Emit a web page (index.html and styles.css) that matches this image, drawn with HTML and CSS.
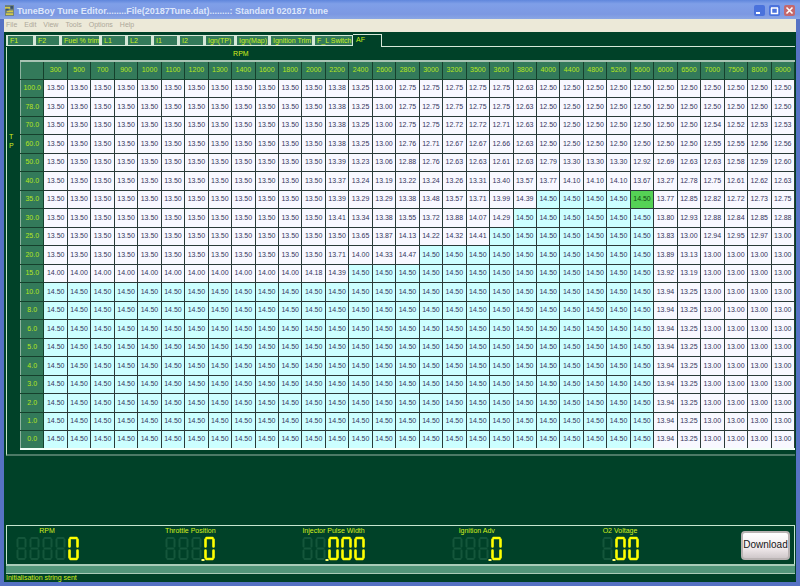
FILE: index.html
```html
<!DOCTYPE html>
<html lang="en">
<head>
<meta charset="utf-8">
<title>TuneBoy Tune Editor</title>
<link rel="stylesheet" href="styles.css">
</head>
<body>
<div class="window">
  <header class="titlebar">
    <svg class="app-icon" viewBox="0 0 10 12" aria-hidden="true">
      <rect width="10" height="12" fill="#6d7f78"/>
      <path d="M0 2h6v2H0zM2 6h7v2H2zM1 9h8v2H1z" fill="#d3c94a"/>
      <path d="M6 1h3v3H6zM1 4h3v2H1z" fill="#39506e"/>
    </svg>
    <h1 class="title">TuneBoy Tune Editor........File(20187Tune.dat)........: Standard 020187 tune</h1>
    <div class="controls">
      <button class="control" aria-label="Minimise"><svg viewBox="0 0 11 11"><path d="M2 7h4v2H2z" fill="#fff"/></svg></button>
      <button class="control" aria-label="Maximise"><svg viewBox="0 0 11 11"><path d="M2 3h7M2.500 3v5.500h6V3" fill="none" stroke="#fff" stroke-width="1.500"/></svg></button>
      <button class="control control-close" aria-label="Close"><svg viewBox="0 0 11 11"><path d="M2.500 2.500l6 6M8.500 2.500l-6 6" stroke="#fff" stroke-width="1.600"/></svg></button>
    </div>
  </header>
  <nav class="menu">
    <a href="#">File</a><a href="#">Edit</a><a href="#">View</a><a href="#">Tools</a><a href="#">Options</a><a href="#">Help</a>
  </nav>
  <main class="client">
    <div class="tabs">
      <button class="tab">F1</button>
      <button class="tab">F2</button>
      <button class="tab tab-fuel">Fuel % trim</button>
      <button class="tab">L1</button>
      <button class="tab">L2</button>
      <button class="tab">I1</button>
      <button class="tab">I2</button>
      <button class="tab tab-tp">Ign(TP)</button>
      <button class="tab tab-map">Ign(Map)</button>
      <button class="tab tab-trim">Ignition Trim</button>
      <button class="tab tab-switch">F_L Switch</button>
      <button class="tab tab-active">AF</button>
      <span class="tab-rule"></span>
    </div>
    <section class="page">
      <div class="axis-y"><span>T</span><span>P</span></div>
      <div class="map">
        <div class="axis-x">RPM</div>
        <table class="grid">
          <thead><tr id="rpm-row"><th></th></tr></thead>
          <tbody id="map-body"></tbody>
        </table>
      </div>
    </section>
    <div class="spacer"></div>
    <section class="dash">
      <div class="gauges">
        <div class="gauge"><span>RPM</span><div class="digits" data-value="----0"></div></div>
        <div class="gauge"><span>Throttle Position</span><div class="digits" data-value="---.0"></div></div>
        <div class="gauge"><span>Injector Pulse Width</span><div class="digits" data-value="--.000"></div></div>
        <div class="gauge"><span>Ignition Adv</span><div class="digits" data-value="---.0"></div></div>
        <div class="gauge"><span>O2 Voltage</span><div class="digits" data-value="-.00"></div></div>
      </div>
      <button class="download">Download</button>
    </section>
    <div class="progress"></div>
    <footer class="status">Initialisation string sent</footer>
  </main>
</div>
<script src="app.js"></script>
</body>
</html>
```
FILE: styles.css
```css
* {
  box-sizing: border-box;
}

body {
  margin: 0;
  font-family: "Liberation Sans", sans-serif;
  font-size: 7px;
  line-height: 10px;
}

button {
  font: inherit;
}

.window {
  display: flex;
  flex-direction: column;
  min-height: 100vh;
  border: solid #5672c4;
  border-width: 0 4px 4px;
  background: #5672c4;
}

.titlebar {
  display: flex;
  align-items: center;
  height: 19px;
  margin: 0 -4px;
  padding: 2px 5px 0 5px;
  background: linear-gradient(#5f86dc, #7f9fe8 20%, #7c98e2 75%, #8aa6e4);
}

.app-icon {
  width: 9px;
  height: 11px;
  margin-right: 3px;
}

.title {
  flex: 1;
  margin: 0;
  color: #dce6fb;
  font: bold 9px/12px "Liberation Sans", sans-serif;
  white-space: pre;
}

.controls {
  display: flex;
  gap: 4px;
}

.control {
  width: 11px;
  height: 11px;
  padding: 0;
  border: 0;
  border-radius: 2px;
  background: #4a72dc;
}

.control-close {
  background: #c4686c;
}

.control svg {
  display: block;
  width: 100%;
}

.menu {
  display: flex;
  gap: 7px;
  height: 13px;
  padding: 0 2px;
  background: #ece9d8;
  line-height: 12px;
}

.menu a {
  color: #aca899;
  text-decoration: none;
}

.client {
  display: flex;
  flex: 1;
  flex-direction: column;
  padding: 2px 1px 0 2px;
  background: #004128;
  color: #d4f01c;
}

.tabs {
  display: flex;
  align-items: flex-end;
  height: 13px;
}

.tab {
  flex: none;
  width: 26px;
  height: 11px;
  margin-bottom: 1px;
  padding: 0 2px;
  border: solid #d6e8d8;
  border-width: 1px 1px 1px 2px;
  background: #337a5a;
  color: #c8f01c;
  line-height: 9px;
  text-align: left;
  white-space: nowrap;
}

.tab:first-child {
  width: 28px;
}

.tab-fuel {
  width: 40px;
}

.tab-tp {
  width: 31px;
}

.tab-map {
  width: 34px;
}

.tab-trim {
  width: 44px;
}

.tab-switch {
  width: 40px;
}

.tab-active {
  width: 29px;
  height: 13px;
  margin-bottom: 0;
  padding: 0 3px 3px;
  border-width: 1px 1px 0 0;
  background: none;
}

.tab-rule {
  flex: 1;
  border-bottom: 1px solid #d6e8d8;
}

.page {
  display: flex;
  padding-bottom: 4px;
  border-bottom: 2px solid #4c7a66;
  border-left: 1px solid #c6e6c8;
}

.axis-y {
  display: flex;
  flex-direction: column;
  width: 13px;
  padding: 85px 0 0 2px;
  line-height: 9px;
}

.map {
  flex: 1;
}

.axis-x {
  width: 57%;
  padding: 2px 0 1px;
  text-align: center;
}

.grid {
  width: 100%;
  border-collapse: collapse;
  border-top: 2px solid #a9c4b4;
  border-bottom: 2px solid #f4fff8;
  border-left: 1px solid #c9dccf;
  table-layout: fixed;
}

.grid th,
.grid td {
  height: 18px;
  padding: 0;
  border: 1px solid #2a3a38;
  font-weight: normal;
  text-align: center;
}

.grid tbody tr:nth-child(even) td {
  height: 19px;
}

.grid th {
  border-color: #8eb3a0 #15402c #15402c #8eb3a0;
  background: #337a5a;
  color: #b4e61e;
}

.grid td {
  background: #f8f8ff;
  color: #34345c;
}

.grid td.rich {
  background: #ccffff;
}

.grid td.current {
  background: #55d255;
  color: #124a12;
}

.spacer {
  flex: 1;
}

.dash {
  display: flex;
  align-items: center;
  height: 39px;
  padding-right: 4px;
  border: solid #c6e6d0;
  border-width: 1px 1px 0;
}

.gauges {
  display: flex;
  flex: 1;
  align-self: flex-start;
  justify-content: space-between;
  margin-right: 81px;
}

.gauge {
  display: flex;
  flex-direction: column;
  align-items: center;
  width: 80px;
}

.digits {
  display: flex;
  gap: 2px;
}

.digit {
  width: 11px;
  height: 25px;
  overflow: visible;
}

.download {
  width: 49px;
  height: 29px;
  padding: 0;
  border: 2px solid #b9b3b3;
  border-radius: 4px;
  background: linear-gradient(#fff, #f1eaec 60%, #cfc8ca);
  color: #161616;
  font-size: 10px;
}

.progress {
  height: 10px;
  border: solid #a9ccb8;
  border-width: 2px 0 1px;
  background: #52967a;
}

.status {
  height: 8px;
  line-height: 8px;
}
```
FILE: app.js
```js
const rpm = [300, 500, 700, 900, 1000, 1100, 1200, 1300, 1400, 1600, 1800,
  2000, 2200, 2400, 2600, 2800, 3000, 3200, 3500, 3600, 3800, 4000, 4400,
  4800, 5200, 5600, 6000, 6500, 7000, 7500, 8000, 9000];

// Each row: throttle position, then values; "v*n" repeats v n times.
const low = "14.50*26 13.94 13.25 13.00*4";
const rows = [
  ["100.0", "13.50*12 13.38 13.25 13.00 12.75*5 12.63 12.50*11"],
  ["78.0", "13.50*12 13.38 13.25 13.00 12.75*5 12.63 12.50*11"],
  ["70.0", "13.50*12 13.38 13.25 13.00 12.75*2 12.72*2 12.71 12.63 12.50*7 12.54 12.52 12.53*2"],
  ["60.0", "13.50*12 13.38 13.25 13.00 12.76 12.71 12.67*2 12.66 12.63 12.50*7 12.55*2 12.56*2"],
  ["50.0", "13.50*12 13.39 13.23 13.06 12.88 12.76 12.63*2 12.61 12.63 12.79 13.30*3 12.92 12.69 12.63*2 12.58 12.59 12.60"],
  ["40.0", "13.50*12 13.37 13.24 13.19 13.22 13.24 13.26 13.31 13.40 13.57 13.77 14.10*3 13.67 13.27 12.78 12.75 12.61 12.62 12.63"],
  ["35.0", "13.50*12 13.39 13.29*2 13.38 13.48 13.57 13.71 13.99 14.39 14.50*5 13.77 12.85 12.82 12.72 12.73 12.75"],
  ["30.0", "13.50*12 13.41 13.34 13.38 13.55 13.72 13.88 14.07 14.29 14.50*6 13.80 12.93 12.88 12.84 12.85 12.88"],
  ["25.0", "13.50*13 13.65 13.87 14.13 14.22 14.32 14.41 14.50*7 13.83 13.00 12.94 12.95 12.97 13.00"],
  ["20.0", "13.50*12 13.71 14.00 14.33 14.47 14.50*10 13.89 13.13 13.00*4"],
  ["15.0", "14.00*11 14.18 14.39 14.50*13 13.92 13.19 13.00*4"],
  ["10.0", low], ["8.0", low], ["6.0", low], ["5.0", low], ["4.0", low],
  ["3.0", low], ["2.0", low], ["1.0", low], ["0.0", low]
];

const header = document.getElementById("rpm-row");
rpm.forEach(value => {
  const cell = document.createElement("th");
  cell.textContent = value;
  header.append(cell);
});

const body = document.getElementById("map-body");
rows.forEach(([throttle, packed]) => {
  const row = body.insertRow();
  const head = document.createElement("th");
  head.textContent = throttle;
  row.append(head);
  const values = packed.split(" ").flatMap(part => {
    const [value, count] = part.split("*");
    return Array(Number(count || 1)).fill(value);
  });
  values.forEach((value, column) => {
    const cell = row.insertCell();
    cell.textContent = value;
    if (value === "14.50") cell.className = "rich";
    if (throttle === "35.0" && rpm[column] === 5600) cell.className = "current";
  });
});

// Seven-segment readouts: "-" is an unlit digit, "." puts a point before the next digit.
const ring = "M2.500 1.500h6M1.500 3v7M9.500 3v7M1.500 14v7M9.500 14v7M2.500 22.500h6";
document.querySelectorAll(".digits").forEach(box => {
  let point = false;
  for (const char of box.dataset.value) {
    if (char === ".") {
      point = true;
      continue;
    }
    const lit = char !== "-";
    const color = lit ? "#ffff00" : "#14563b";
    box.insertAdjacentHTML("beforeend",
      `<svg class="digit" viewBox="0 0 11 24" aria-hidden="true">
        <path d="${ring}${lit ? "" : "M2.500 12h6"}" fill="none" stroke="${color}"
          stroke-width="${lit ? 2.6 : 2}" stroke-linecap="round"/>
        ${point ? '<path d="M-2.500 22.500h3v2h-3z" fill="#ffff70"/>' : ""}
      </svg>`);
    point = false;
  }
});
```
